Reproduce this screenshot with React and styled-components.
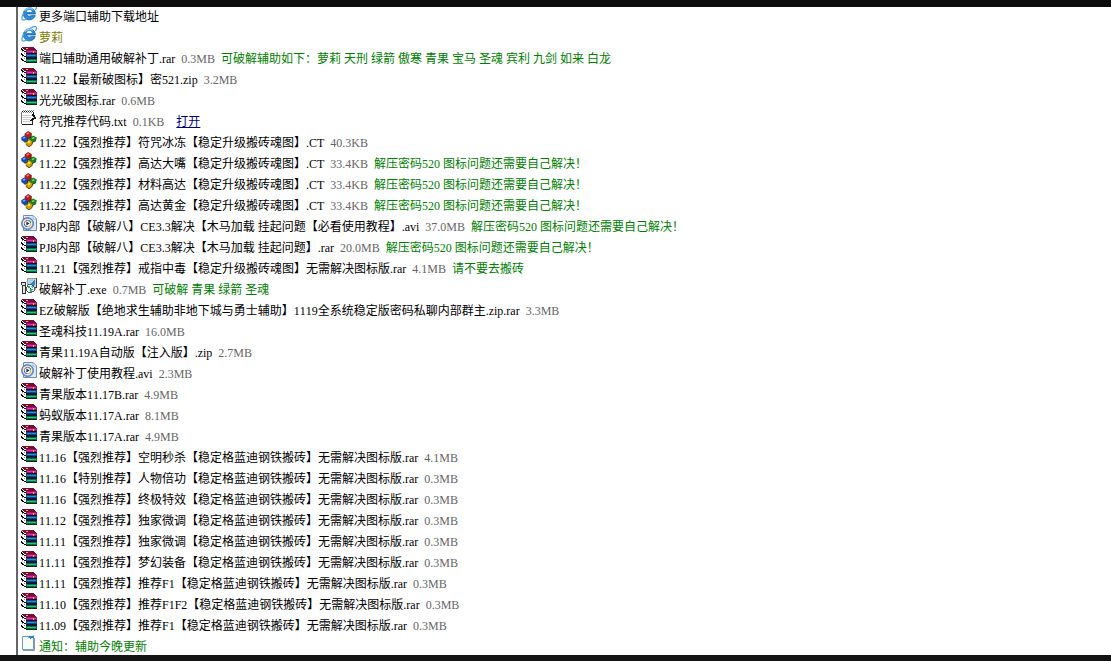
import React from "react";
import styled, { createGlobalStyle } from "styled-components";

const GlobalStyle = createGlobalStyle`
    body {
        margin: 0;
        background: #fff;
    }
`

const Page = styled.div`
    display: flex;
    flex-direction: column;
    min-height: 100vh;
    font-family: "Liberation Serif", "Noto Sans CJK SC", serif;
    font-size: 12px;
    font-kerning: none;
    color: #000;
`

const TopBar = styled.header`
    position: relative;
    height: 7px;
    background: #0d0d0d;
`

const BottomBar = styled.footer`
    position: relative;
    height: 6px;
    background: #141414;
`

// the list slides a little under both bars
const FileList = styled.ul`
    flex: 1;
    list-style: none;
    margin: -2px 0 -1px 16px;
    padding: 0 0 0 3px;
    border-left: 2px solid #666;
`

const Row = styled.li`
    display: flex;
    align-items: flex-start;
    height: 21px;
    white-space: nowrap;
`

const Icon = styled.svg`
    flex: none;
    width: 16px;
    height: 16px;
    margin-right: 2px;
`

const Line = styled.div`
    display: flex;
    gap: 6px;
    padding-top: 3px;
    line-height: 18px;
`

const Name = styled.a`
    color: ${(props) => props.$color || "#000"};
    text-decoration: none;
`

const Size = styled.span`
    color: #666;
`

const Note = styled.span`
    color: #008000;
`

const OpenLink = styled.a`
    margin-left: 6px;
    color: #000080;
    text-decoration: underline;
`

const RarIcon = () => (
    <Icon viewBox="0 0 16 16" shapeRendering="crispEdges" aria-hidden="true">
        <path d="M0 1h2v1h2v2h2v12H4v-1H2v-2H0z" fill="#fff" />
        <path d="M0 1h1v1h1v1h1v1h2v1H3V4H1V3H0zM0 6h1v1h1v1h1v1h2v1H3V9H1V8H0zM0 11h1v1h1v1h1v1h2v1H3v-1H1v-1H0z" fill="#000" />
        <path d="M1 4h1v1H1zM3 6h1v1H3zM1 9h1v1H1zM3 11h1v1H3z" fill="#888" />
        <path d="M1 0h12v1h1v1h1v1h1v1H5V3H3V2H2V1H1z" fill="#780c38" />
        <path d="M5 3h11v3H5z" fill="#a01070" />
        <path d="M6 4h9v1H6z" fill="#d83ca0" />
        <path d="M5 6h11v1H5z" fill="#200818" />
        <path d="M5 7h11v3H5z" fill="#084c94" />
        <path d="M6 8h9v1H6z" fill="#2e8ad6" />
        <path d="M5 10h11v2H5z" fill="#04142c" />
        <path d="M5 12h11v3H5z" fill="#077040" />
        <path d="M6 13h9v1H6z" fill="#2ec088" />
        <path d="M5 15h11v1H5z" fill="#022414" />
        <path d="M5 1h2v1H5zM12 4h1v2h-1z" fill="#f0c020" />
    </Icon>
)

const IeIcon = () => (
    <Icon viewBox="0 0 16 16" aria-hidden="true">
        <path d="M14.2 10.4A6 6 0 1 1 14.4 8.9H5.4A3.1 3.1 0 0 0 10.4 10.4Z" fill="#2c8cd8" stroke="#1260a8" strokeWidth=".8" />
        <path d="M5.6 6.9A2.8 2.8 0 0 1 11 6.9Z" fill="#fff" />
        <path d="M3.6 5.8C5.2 3.4 9.2 2.6 12 4.4" fill="none" stroke="#86ccf8" strokeWidth="1.4" />
        <path d="M9.4 2.2C12 .4 15.6-.4 15.4 2.2c0 1-.4 1.8-.9 2.6M2.8 8.2C.4 11.6.2 15 2.2 15.2c1.2 0 2.6-.7 3.8-1.6" fill="none" stroke="#48a8e8" strokeWidth="1.3" />
    </Icon>
)

const TextIcon = () => (
    <Icon viewBox="0 0 16 16" shapeRendering="crispEdges" aria-hidden="true">
        <path d="M1 2h12v13H1z" fill="#fff" />
        <path d="M0 2h1v12H0z" fill="#777" />
        <path d="M1 14h11v1H1zM12 2h1v3h-1zM11 10h1v4h-1z" fill="#222" />
        <path d="M1 1h1v1H1zM3 1h1v1H3zM5 1h1v1H5zM7 1h1v1H7zM9 1h1v1H9zM11 1h1v1h-1z" fill="#222" />
        <path d="M2 0h1v1H2zM4 0h1v1H4zM6 0h1v1H6zM8 0h1v1H8zM10 0h1v1h-1zM12 0h1v1h-1zM2 2h1v1H2zM4 2h1v1H4zM6 2h1v1H6zM8 2h1v1H8zM10 2h1v1h-1z" fill="#888" />
        <path d="M2 5h9v1H2zM2 7h8v1H2zM2 9h7v1H2zM2 11h7v1H2z" fill="#ccc" />
        <path d="M11 4h2v1h1v2h1v2h-2v1h-2v1H9v-1h1V9h1V8h1V6h-1z" fill="#111" />
        <path d="M12 7h1v1h-1z" fill="#ddd" />
    </Icon>
)

const CtIcon = () => (
    <Icon viewBox="0 0 16 16" aria-hidden="true">
        <path d="M3.6 2.4 7.2 0 10.4 2 10.2 6.4 7.4 8 3.8 5.6Z" fill="#b81a1a" />
        <path d="M5.2 2.6 7.2 1.2 8.4 2.2 6.4 3.8Z" fill="#f08a80" />
        <path d="M.2 6.6 3.4 4.2 7.2 7 6.8 10.2 3.8 11.4.4 9Z" fill="#1648b8" />
        <path d="M1.7 6.8 3.3 5.5 4.6 6.6 2.8 8.1Z" fill="#7cacfc" />
        <path d="M7.6 6.9 12.2 4.6 15.8 6.4 15 9.8 11.6 11.4 7.8 9.6Z" fill="#1c8020" />
        <path d="M10.6 6.9 12.5 5.9 13.8 7 11.6 8.2Z" fill="#80d866" />
        <path d="M4.4 10.4 8 8.2 11.8 10.9 10.9 13.8 8.1 16 4.8 13.6Z" fill="#cfa000" />
        <path d="M6.2 10.8 8 9.6 9.7 10.9 8 12.4Z" fill="#fcec50" />
        <path d="M10.3 2.2 10 6.2 7.2 7.8M6.9 7.1 6.6 10.1 3.7 11.2M15 9.7 11.6 11.3M11.6 11 10.9 13.8 8.1 15.8 4.8 13.5" fill="none" stroke="#3b2618" strokeWidth=".8" />
    </Icon>
)

const AviIcon = () => (
    <Icon viewBox="0 0 16 16" aria-hidden="true">
        <path d="M2.5.5H12L15.5 4V15.5H2.5Z" fill="#dce9fb" stroke="#6c8cc4" />
        <path d="M12 .5V4H15.5Z" fill="#fff" stroke="#7c9ccb" strokeWidth=".7" />
        <circle cx="6.5" cy="8.6" r="6" fill="#8ca4cc" stroke="#48689c" strokeWidth=".8" />
        <circle cx="6.5" cy="8.6" r="4.6" fill="#fff" />
        <path d="M3.3 8.6A3.2 3.2 0 0 1 6.5 5.4" fill="none" stroke="#e06030" strokeWidth="1.1" />
        <path d="M6.5 5.4A3.2 3.2 0 0 1 9.7 8.6" fill="none" stroke="#48a058" strokeWidth="1.1" />
        <path d="M9.7 8.6A3.2 3.2 0 0 1 6.5 11.8" fill="none" stroke="#e0b440" strokeWidth="1.1" />
        <path d="M6.5 11.8A3.2 3.2 0 0 1 3.3 8.6" fill="none" stroke="#3868c8" strokeWidth="1.1" />
        <path d="M5.4 6.6 8.6 8.6 5.4 10.6Z" fill="#102c80" />
    </Icon>
)

const ExeIcon = () => (
    <Icon viewBox="0 0 16 16" shapeRendering="crispEdges" aria-hidden="true">
        <path d="M6 0h9v9H6z" fill="#d4d0c8" />
        <path d="M15 0h1v10h-1zM10 9h5v1h-5z" fill="#444" />
        <path d="M6 0h9v1H6zM6 1h1v6H6z" fill="#999" />
        <path d="M8 2h6v5H8z" fill="#2c84d0" />
        <path d="M8 2h5v1h-1v1h-1v1h-1v1H8z" fill="#90dcfc" />
        <path d="M12 10h3v2h-3z" fill="#aaa" />
        <path d="M1 5h4v10H1z" fill="#e4e4e4" />
        <path d="M0 4h5v1H0zM0 5h1v2H0zM1 7h3v1H1zM1 8h1v7H1zM4 5h1v10H4zM1 15h4v1H1z" fill="#333" />
        <path d="M7 6h4v1h2v2h1v4h-1v1h-2v1H7v-1H6v-1H5V9h1V7h1z" fill="#555" />
        <path d="M7 7h4v1h1v1h1v4h-2v1H7v-1H6V9h1z" fill="#f0f4f6" />
        <path d="M9 11h3v1h-1v2H9zM7 8h2v2H7z" fill="#20b860" />
        <path d="M10 8h2v2h-1V9h-1z" fill="#40c8d8" />
        <path d="M9 10h1v1H9z" fill="#222" />
    </Icon>
)

const NoticeIcon = () => (
    <Icon viewBox="0 0 16 16" aria-hidden="true">
        <path d="M1.5 1.5H12.5V14.5H1.5Z" fill="#f9fcf0" stroke="#6c9cc6" />
        <path d="M2 15.5H13.5V3" fill="none" stroke="#8898ac" />
        <path d="M7 2.4 8.6.8 10.2 1.5 12.8.2V3.2L10.6 3 9.4 4.6 8.8 3Z" fill="#247fc0" />
    </Icon>
)

const icons = {
    ie: IeIcon,
    rar: RarIcon,
    txt: TextIcon,
    ct: CtIcon,
    avi: AviIcon,
    exe: ExeIcon,
    notice: NoticeIcon,
}

const password = "解压密码520 图标问题还需要自己解决！"

const files = [
    { icon: "ie", name: "更多端口辅助下载地址" },
    { icon: "ie", name: "萝莉", color: "#808000" },
    { icon: "rar", name: "端口辅助通用破解补丁.rar", size: "0.3MB", note: "可破解辅助如下：萝莉 天刑 绿箭 傲寒 青果 宝马 圣魂 宾利 九剑 如来 白龙" },
    { icon: "rar", name: "11.22【最新破图标】密521.zip", size: "3.2MB" },
    { icon: "rar", name: "光光破图标.rar", size: "0.6MB" },
    { icon: "txt", name: "符咒推荐代码.txt", size: "0.1KB", open: true },
    { icon: "ct", name: "11.22【强烈推荐】符咒冰冻【稳定升级搬砖魂图】.CT", size: "40.3KB" },
    { icon: "ct", name: "11.22【强烈推荐】高达大嘴【稳定升级搬砖魂图】.CT", size: "33.4KB", note: password },
    { icon: "ct", name: "11.22【强烈推荐】材料高达【稳定升级搬砖魂图】.CT", size: "33.4KB", note: password },
    { icon: "ct", name: "11.22【强烈推荐】高达黄金【稳定升级搬砖魂图】.CT", size: "33.4KB", note: password },
    { icon: "avi", name: "PJ8内部【破解八】CE3.3解决【木马加载 挂起问题【必看使用教程】.avi", size: "37.0MB", note: password },
    { icon: "rar", name: "PJ8内部【破解八】CE3.3解决【木马加载 挂起问题】.rar", size: "20.0MB", note: password },
    { icon: "rar", name: "11.21【强烈推荐】戒指中毒【稳定升级搬砖魂图】无需解决图标版.rar", size: "4.1MB", note: "请不要去搬砖" },
    { icon: "exe", name: "破解补丁.exe", size: "0.7MB", note: "可破解 青果 绿箭 圣魂" },
    { icon: "rar", name: "EZ破解版【绝地求生辅助非地下城与勇士辅助】1119全系统稳定版密码私聊内部群主.zip.rar", size: "3.3MB" },
    { icon: "rar", name: "圣魂科技11.19A.rar", size: "16.0MB" },
    { icon: "rar", name: "青果11.19A自动版【注入版】.zip", size: "2.7MB" },
    { icon: "avi", name: "破解补丁使用教程.avi", size: "2.3MB" },
    { icon: "rar", name: "青果版本11.17B.rar", size: "4.9MB" },
    { icon: "rar", name: "蚂蚁版本11.17A.rar", size: "8.1MB" },
    { icon: "rar", name: "青果版本11.17A.rar", size: "4.9MB" },
    { icon: "rar", name: "11.16【强烈推荐】空明秒杀【稳定格蓝迪钢铁搬砖】无需解决图标版.rar", size: "4.1MB" },
    { icon: "rar", name: "11.16【特别推荐】人物倍功【稳定格蓝迪钢铁搬砖】无需解决图标版.rar", size: "0.3MB" },
    { icon: "rar", name: "11.16【强烈推荐】终极特效【稳定格蓝迪钢铁搬砖】无需解决图标版.rar", size: "0.3MB" },
    { icon: "rar", name: "11.12【强烈推荐】独家微调【稳定格蓝迪钢铁搬砖】无需解决图标版.rar", size: "0.3MB" },
    { icon: "rar", name: "11.11【强烈推荐】独家微调【稳定格蓝迪钢铁搬砖】无需解决图标版.rar", size: "0.3MB" },
    { icon: "rar", name: "11.11【强烈推荐】梦幻装备【稳定格蓝迪钢铁搬砖】无需解决图标版.rar", size: "0.3MB" },
    { icon: "rar", name: "11.11【强烈推荐】推荐F1【稳定格蓝迪钢铁搬砖】无需解决图标版.rar", size: "0.3MB" },
    { icon: "rar", name: "11.10【强烈推荐】推荐F1F2【稳定格蓝迪钢铁搬砖】无需解决图标版.rar", size: "0.3MB" },
    { icon: "rar", name: "11.09【强烈推荐】推荐F1【稳定格蓝迪钢铁搬砖】无需解决图标版.rar", size: "0.3MB" },
    { icon: "notice", name: "通知：辅助今晚更新", color: "#008000" },
]

const FileRow = ({ file }) => {
    const FileIcon = icons[file.icon];

    return (
        <Row>
            <FileIcon />
            <Line>
                <Name href="#" $color={file.color}>{file.name}</Name>
                {file.size && <Size>{file.size}</Size>}
                {file.note && <Note>{file.note}</Note>}
                {file.open && <OpenLink href="#">打开</OpenLink>}
            </Line>
        </Row>
    );
}

export default function App() {
    return (
        <Page>
            <GlobalStyle />
            <TopBar />
            <FileList>
                {files.map((file, i) => (
                    <FileRow key={i} file={file} />
                ))}
            </FileList>
            <BottomBar />
        </Page>
    );
}
